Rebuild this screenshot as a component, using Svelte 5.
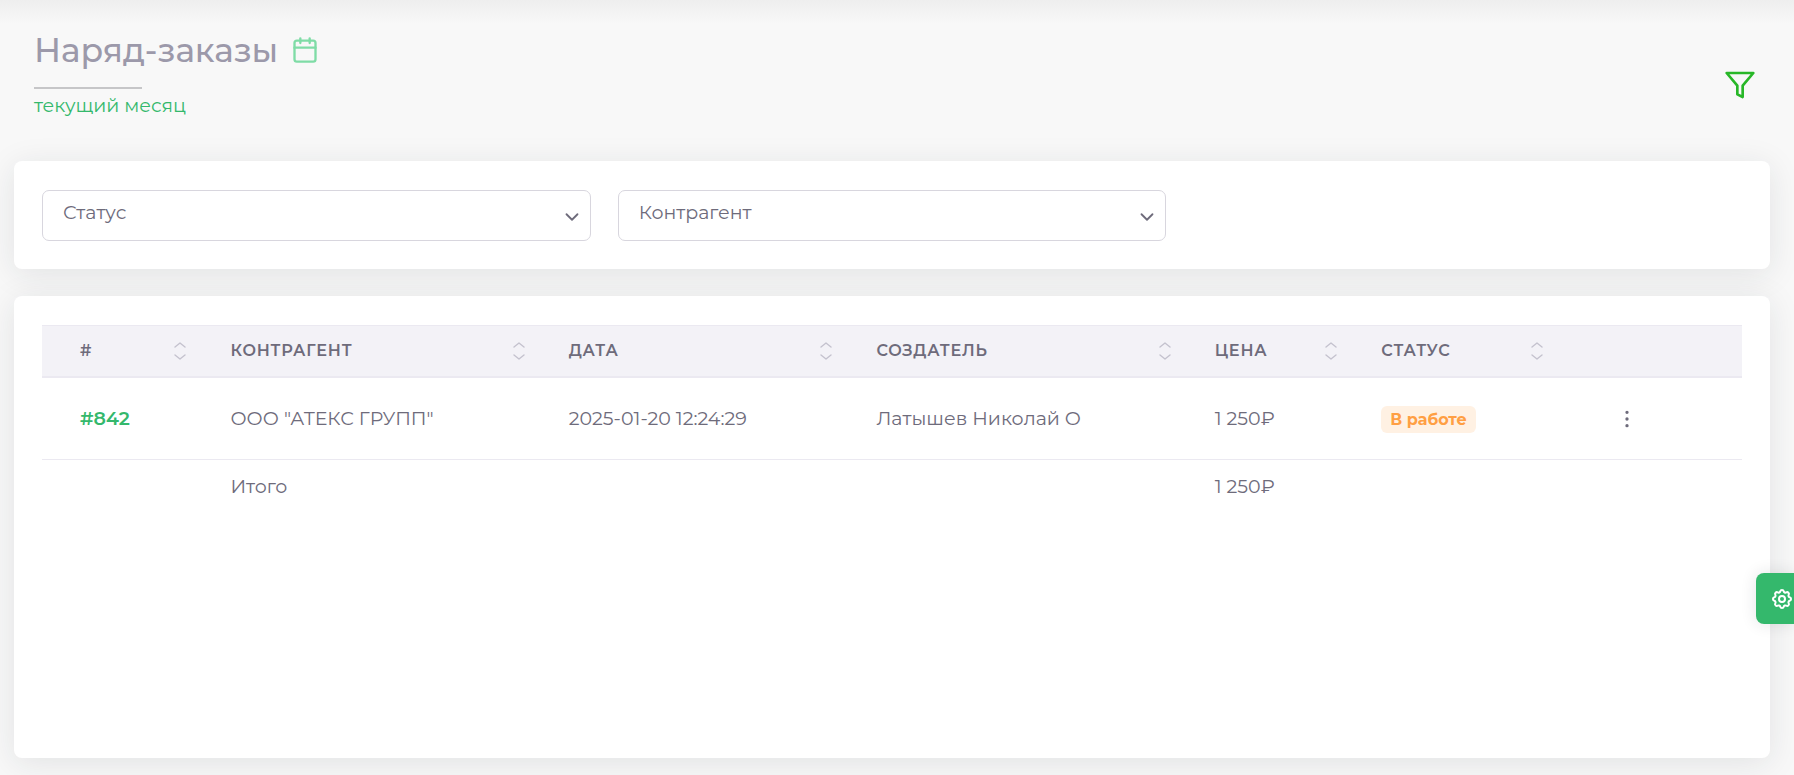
<script lang="ts">
	type Column = { title: string; width: number; sortable: boolean };

	const columns: Column[] = [
		{ title: '#', width: 8.85, sortable: true },
		{ title: 'Контрагент', width: 19.9, sortable: true },
		{ title: 'Дата', width: 18.1, sortable: true },
		{ title: 'Создатель', width: 19.9, sortable: true },
		{ title: 'Цена', width: 9.8, sortable: true },
		{ title: 'Статус', width: 12.1, sortable: true },
		{ title: '', width: 11.35, sortable: false }
	];

	const orders = [
		{
			id: 842,
			client: 'ООО "АТЕКС ГРУПП"',
			date: '2025-01-20 12:24:29',
			author: 'Латышев Николай О',
			price: '1 250₽',
			status: 'В работе'
		}
	];

	const filters = [
		{ id: 'status', label: 'Статус' },
		{ id: 'client', label: 'Контрагент' }
	];
</script>

<svelte:head>
	<title>Наряд-заказы</title>
</svelte:head>

<div class="page">
	<header>
		<div class="heading">
			<div class="title">
				<h1>Наряд-заказы</h1>
				<button class="icon-btn calendar" aria-label="Период">
					<svg viewBox="0 0 24 24" width="28" height="28">
						<rect x="3" y="4" width="18" height="18" rx="2" />
						<path d="M16 2v4M8 2v4M3 10h18" />
					</svg>
				</button>
			</div>
			<hr />
			<a class="period" href="#period">текущий месяц</a>
		</div>
		<button class="icon-btn filter" aria-label="Фильтр">
			<svg viewBox="0 0 24 24" width="32" height="32">
				<path d="M22 3H2l8 9.46V19l4 2v-8.54L22 3z" />
			</svg>
		</button>
	</header>

	<section class="card filters">
		{#each filters as f (f.id)}
			<div class="field">
				<select id={f.id} aria-label={f.label}>
					<option>{f.label}</option>
				</select>
				<svg viewBox="0 0 24 24" width="22" height="22" aria-hidden="true">
					<path d="M6 9l6 6 6-6" />
				</svg>
			</div>
		{/each}
	</section>

	<section class="card orders">
		<table>
			<colgroup>
				{#each columns as c}
					<col style="width: {c.width}%" />
				{/each}
			</colgroup>
			<thead>
				<tr>
					{#each columns as c}
						<th>
							{#if c.sortable}
								<button class="sort">
									{c.title}
									<svg viewBox="0 0 12 18" width="12" height="18" aria-hidden="true">
										<path d="M1 5l5-4 5 4M1 13l5 4 5-4" />
									</svg>
								</button>
							{/if}
						</th>
					{/each}
				</tr>
			</thead>
			<tbody>
				{#each orders as o (o.id)}
					<tr>
						<td><a class="order-link" href="#{o.id}">#{o.id}</a></td>
						<td>{o.client}</td>
						<td>{o.date}</td>
						<td>{o.author}</td>
						<td>{o.price}</td>
						<td><span class="badge">{o.status}</span></td>
						<td>
							<button class="icon-btn more" aria-label="Действия">
								<svg viewBox="0 0 24 24" width="20" height="20">
									<circle cx="12" cy="12" r="1" />
									<circle cx="12" cy="4" r="1" />
									<circle cx="12" cy="20" r="1" />
								</svg>
							</button>
						</td>
					</tr>
				{/each}
			</tbody>
			<tfoot>
				<tr>
					<td></td>
					<td>Итого</td>
					<td></td>
					<td></td>
					<td>1 250₽</td>
					<td></td>
					<td></td>
				</tr>
			</tfoot>
		</table>
	</section>
</div>

<button class="customizer" aria-label="Настройки">
	<svg viewBox="0 0 24 24" width="24" height="24">
		<circle cx="12" cy="12" r="3" />
		<path
			d="M10.3 4.3c.4-1.8 3-1.8 3.4 0a1.7 1.7 0 0 0 2.6 1.1c1.5-.9 3.3.8 2.4 2.4a1.7 1.7 0 0 0 1 2.5c1.8.4 1.8 3 0 3.4a1.7 1.7 0 0 0-1 2.6c.9 1.5-.9 3.3-2.4 2.4a1.7 1.7 0 0 0-2.6 1c-.4 1.8-3 1.8-3.4 0a1.7 1.7 0 0 0-2.6-1c-1.5.9-3.3-.9-2.4-2.4a1.7 1.7 0 0 0-1-2.6c-1.8-.4-1.8-3 0-3.4a1.7 1.7 0 0 0 1-2.5c-.9-1.6.9-3.3 2.4-2.4a1.7 1.7 0 0 0 2.6-1.1z"
		/>
	</svg>
</button>

<style>
	:global(*, *::before, *::after) {
		box-sizing: border-box;
	}

	:global(body) {
		margin: 0;
		background: #f8f8f8;
		color: #6e6b7b;
		font-family: 'Montserrat', 'Inter', 'Open Sans', sans-serif;
		font-size: 19px;
		line-height: 28px;
	}

	button,
	select {
		font: inherit;
		color: inherit;
		cursor: pointer;
	}

	svg {
		display: block;
		fill: none;
		stroke: currentColor;
		stroke-width: 2;
		stroke-linecap: round;
		stroke-linejoin: round;
	}

	.page {
		display: flex;
		flex-direction: column;
		min-height: 100vh;
		padding: 0 24px 17px 14px;
		/* shadow of the top bar */
		background: linear-gradient(#eeeeee, #f8f8f8 24px);
	}

	/* header */
	header {
		display: flex;
		align-items: center;
		justify-content: space-between;
		padding: 28px 14px 20px 20px;
	}

	.heading {
		padding-bottom: 21px;
	}

	.title {
		display: flex;
		align-items: center;
		gap: 13px;
	}

	h1 {
		margin: 0;
		color: #9c99aa;
		font-size: 33px;
		font-weight: 500;
		line-height: 44px;
	}

	hr {
		width: 108px;
		height: 2px;
		margin: 15px 0 3px;
		border: 0;
		background: #c6c6c8;
	}

	.icon-btn {
		padding: 0;
		border: 0;
		background: none;
	}

	.calendar { color: #7fdca6; }
	.filter { color: #28b728; }

	.period {
		display: block;
		color: #34b86c;
		text-decoration: none;
	}

	/* cards */
	.card {
		padding: 29px 28px 28px;
		border-radius: 8px;
		background: #fff;
		box-shadow: 0 5px 32px rgba(34, 41, 47, 0.1);
	}

	.filters {
		display: grid;
		grid-template-columns: repeat(3, 1fr);
		gap: 27px;
		margin-bottom: 27px;
	}

	.field {
		display: grid;
		align-items: center;
	}

	.field select,
	.field svg {
		grid-area: 1 / 1;
	}

	.field svg {
		justify-self: end;
		margin: 3px 8px 0 0;
		pointer-events: none;
	}

	select {
		appearance: none;
		height: 51px;
		padding: 0 40px 6px 20px;
		border: 1px solid #d8d6de;
		border-radius: 7px;
		background: #fff;
	}

	.orders {
		flex: 1;
	}

	/* table */
	table {
		width: 100%;
		table-layout: fixed;
		border-collapse: separate;
		border-spacing: 0;
	}

	th {
		height: 53px;
		padding: 0 6px 0 38px;
		border-top: 1px solid #ebe9f1;
		border-bottom: 2px solid #ebe9f1;
		background: #f3f2f7;
	}

	.sort {
		display: flex;
		align-items: center;
		justify-content: space-between;
		width: 100%;
		padding: 0;
		border: 0;
		background: none;
		font-size: 16px;
		font-weight: 600;
		letter-spacing: 0.05em;
		text-transform: uppercase;
	}

	.sort svg {
		color: #c4c2ce;
		stroke-width: 1.4;
	}

	td {
		height: 53px;
		padding: 0 0 0 38px;
		white-space: nowrap;
	}

	tbody td {
		height: 82px;
		border-bottom: 1px solid #ebe9f1;
	}

	.order-link {
		color: #34b86c;
		font-weight: 600;
		text-decoration: none;
	}

	.badge {
		display: inline-block;
		padding: 0 9px;
		border-radius: 6px;
		background: #fff1e3;
		color: #ff9f43;
		font-size: 16px;
		font-weight: 700;
		line-height: 27px;
	}

	.more {
		display: block;
		padding: 0 30px;
	}

	.customizer {
		position: fixed;
		top: 573px;
		right: 0;
		padding: 14px 0 13px 14px;
		border: 0;
		border-radius: 8px 0 0 8px;
		background: #34b86c;
		color: #fff;
		box-shadow: 0 0 16px rgba(34, 41, 47, 0.12);
	}
</style>
